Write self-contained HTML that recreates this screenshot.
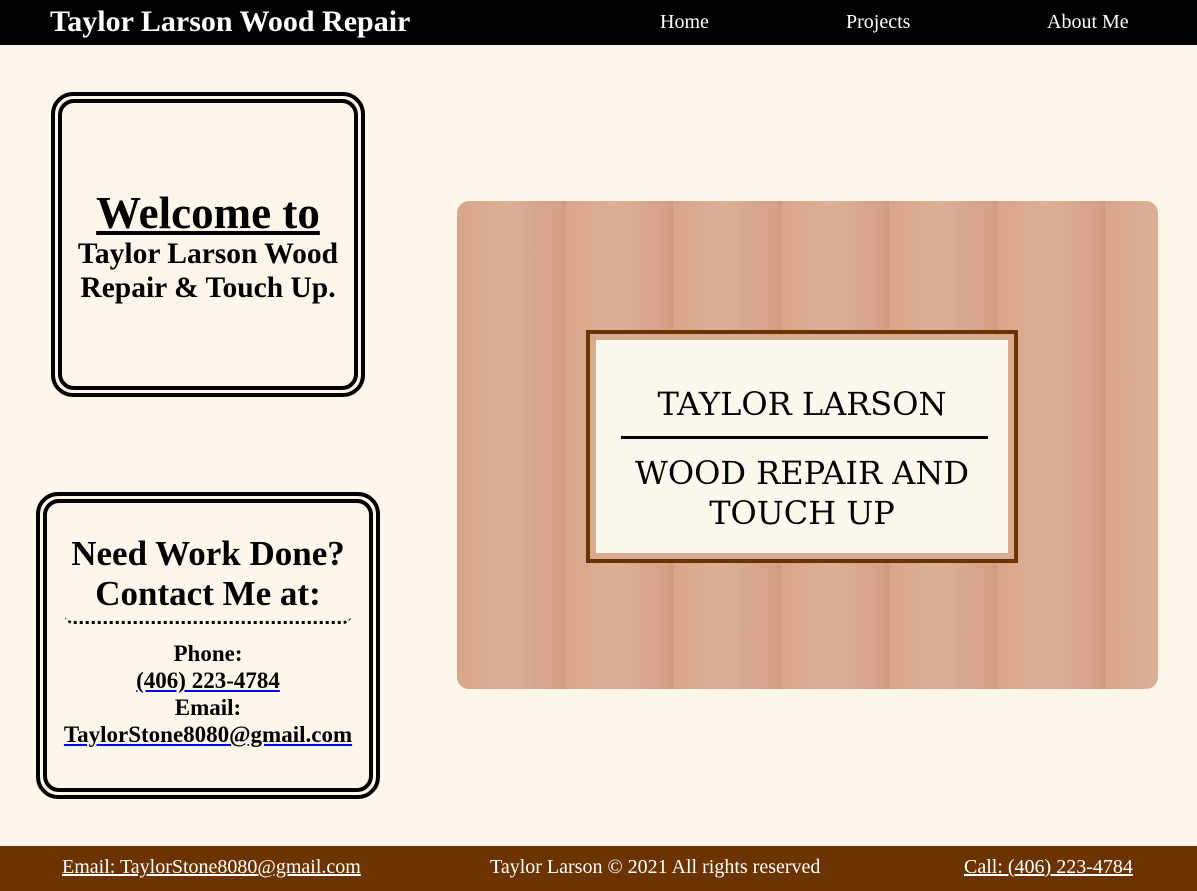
<!DOCTYPE html>
<html><head><style>
*{margin:0;padding:0;box-sizing:border-box}
body{width:1197px;height:891px;background:#fdf7eb;font-family:"Liberation Serif",serif;position:relative;overflow:hidden}
.nav{position:absolute;left:0;top:0;width:1197px;height:45px;background:#000;color:#fff}
.nav .t{position:absolute;left:50px;top:5px;font-size:30px;font-weight:bold}
.nav a{position:absolute;top:11px;font-size:20px;color:#fff;text-decoration:none}
.box{position:absolute;border:4px solid #000;border-radius:22px;padding:3px}
.box .in{border:4px solid #000;border-radius:16px;width:100%;height:100%;text-align:center;font-weight:bold}
.wood{position:absolute;left:457px;top:201px;width:701px;height:488px;border-radius:12px;
background:repeating-linear-gradient(90deg,#d8a58a 0,#dcb096 50px,#d3a086 104px,#c99a80 108px);overflow:hidden}
.sign{position:absolute;left:586px;top:330px;width:432px;height:233px;border:4px solid #6b3300;background:#d8ab90;padding:6px}
.sign .c{background:#fcf8ed;width:100%;height:100%;text-align:center;font-family:"DejaVu Serif","Liberation Serif",serif;color:#000}
.foot{position:absolute;left:0;top:846px;width:1197px;height:45px;background:#6b3300;color:#fff;font-size:20px}
.foot span{position:absolute;top:10px}
.l{color:#000;text-decoration:underline;text-decoration-color:#00f}
</style></head><body>
<div class="nav"><div class="t">Taylor Larson Wood Repair</div>
<a style="left:660px">Home</a><a style="left:846px">Projects</a><a style="left:1047px">About Me</a></div>

<div class="box" style="left:51px;top:92px;width:314px;height:305px"><div class="in">
<div style="font-size:45px;text-decoration:underline;margin-top:86px;line-height:48px">Welcome to</div>
<div style="font-size:29.5px;line-height:34px">Taylor Larson Wood Repair &amp; Touch Up.</div>
</div></div>

<div class="box" style="left:36px;top:492px;width:344px;height:307px"><div class="in">
<div style="font-size:35px;line-height:40px;margin-top:31px">Need Work Done?<br>Contact Me at:</div>
<div style="margin:2px 18px 0;height:8px;border-bottom:3px dotted #000;border-radius:0 0 8px 8px"></div>
<div style="font-size:23px;line-height:27px;margin-top:16px">Phone:<br><span class="l">(406) 223-4784</span><br>Email:<br><span class="l">TaylorStone8080@gmail.com</span></div>
</div></div>

<div class="wood"></div>
<div class="sign"><div class="c">
<div style="font-size:32px;padding-top:44px;line-height:40px">TAYLOR LARSON</div>
<div style="height:3px;background:#000;margin:12px 20px 14px 25px"></div>
<div style="font-size:32px;line-height:40px">WOOD REPAIR AND<br>TOUCH UP</div>
</div></div>

<div class="foot"><span style="left:62px;text-decoration:underline">Email: TaylorStone8080@gmail.com</span>
<span style="left:490px">Taylor Larson © 2021 All rights reserved</span>
<span style="left:964px;text-decoration:underline">Call: (406) 223-4784</span></div>
</body></html>
